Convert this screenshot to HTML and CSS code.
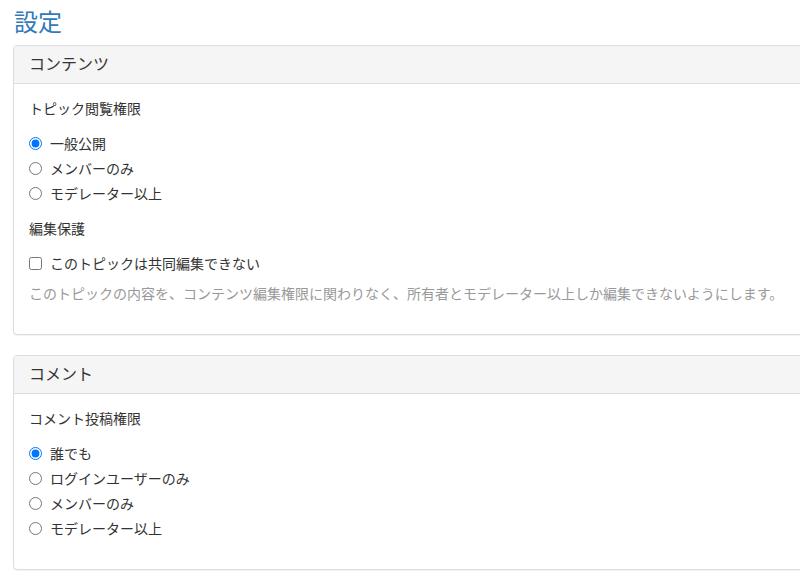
FILE: index.html
```html
<!DOCTYPE html>
<html lang="ja">
<head>
<meta charset="utf-8">
<title>設定</title>
<link rel="stylesheet" href="styles.css">
</head>
<body>
<div class="page">
  <h1 class="title">設定</h1>

  <section class="panel">
    <div class="panel-heading">コンテンツ</div>
    <div class="panel-body">
      <div class="form-group">
        <div class="group-label">トピック閲覧権限</div>
        <div class="options">
          <label class="option"><input type="radio" name="view" checked><span>一般公開</span></label>
          <label class="option"><input type="radio" name="view"><span>メンバーのみ</span></label>
          <label class="option"><input type="radio" name="view"><span>モデレーター以上</span></label>
        </div>
      </div>
      <div class="form-group">
        <div class="group-label">編集保護</div>
        <div class="options">
          <label class="option"><input type="checkbox"><span>このトピックは共同編集できない</span></label>
        </div>
        <p class="help">このトピックの内容を、コンテンツ編集権限に関わりなく、所有者とモデレーター以上しか編集できないようにします。</p>
      </div>
    </div>
  </section>

  <section class="panel">
    <div class="panel-heading">コメント</div>
    <div class="panel-body">
      <div class="form-group">
        <div class="group-label">コメント投稿権限</div>
        <div class="options">
          <label class="option"><input type="radio" name="comment" checked><span>誰でも</span></label>
          <label class="option"><input type="radio" name="comment"><span>ログインユーザーのみ</span></label>
          <label class="option"><input type="radio" name="comment"><span>メンバーのみ</span></label>
          <label class="option"><input type="radio" name="comment"><span>モデレーター以上</span></label>
        </div>
      </div>
    </div>
  </section>
</div>
</body>
</html>
```

FILE: styles.css
```css
html, body {
  margin: 0;
  padding: 0;
  background: #fff;
  overflow: hidden;
}

body {
  font-family: "Noto Sans CJK JP", "Noto Sans", sans-serif;
  font-size: 14px;
  line-height: 20px;
  color: #333;
}

.page {
  padding-left: 13px;
  width: 830px;
}

.title {
  margin: 7px 0 11px 1px;
  font-size: 24px;
  line-height: 27px;
  font-weight: normal;
  color: #337ab7;
}

.panel {
  border: 1px solid #ddd;
  border-radius: 4px;
  margin-bottom: 20px;
  background: #fff;
  box-shadow: 0 1px 1px rgba(0, 0, 0, 0.05);
}

.panel-heading {
  background: #f5f5f5;
  border-bottom: 1px solid #ddd;
  border-radius: 3px 3px 0 0;
  padding: 9px 15px 11px;
  font-size: 16px;
  line-height: 17px;
  color: #333;
}

.panel-body {
  padding: 14px 15px 16px;
}

.form-group {
  padding-bottom: 15px;
}

.group-label {
  margin-bottom: 15px;
}

.options {
  display: flex;
  flex-direction: column;
  gap: 5px;
}

.option {
  display: flex;
  align-items: center;
  gap: 8px;
  height: 20px;
}

.option input {
  margin: 1px 0 0;
  width: 13px;
  height: 13px;
}

.help {
  margin: 10px 0 0;
  color: #999;
}
```
